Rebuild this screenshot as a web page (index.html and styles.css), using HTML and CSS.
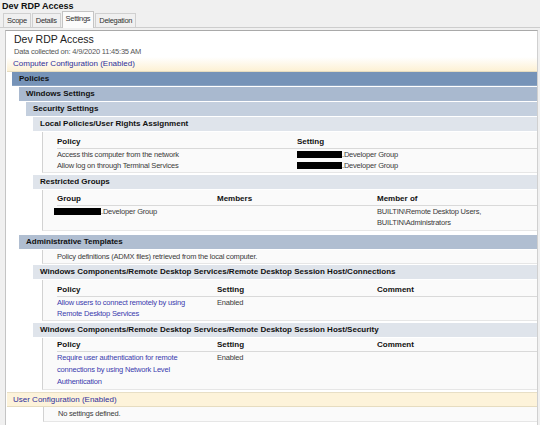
FILE: index.html
```html
<!DOCTYPE html>
<html lang="en">
<head>
    <meta charset="UTF-8">
    <title>Dev RDP Access</title>
    <link rel="stylesheet" href="styles.css">
</head>
<body>
    <div class="win-title">Dev RDP Access</div>

    <div class="tabs">
        <span class="tab">Scope</span>
        <span class="tab">Details</span>
        <span class="tab active">Settings</span>
        <span class="tab">Delegation</span>
    </div>

    <div class="panel">
        <div class="report-title">Dev RDP Access</div>
        <div class="collected">Data collected on: 4/9/2020 11:45:35 AM</div>

        <!-- computer side -->
        <div class="cfg-head">Computer Configuration (Enabled)</div>
        <div class="cfg-body">
            <div class="bar lvl1">Policies</div>
            <div class="sec-body">
                <div class="bar lvl2">Windows Settings</div>
                <div class="sec-body">
                    <div class="bar lvl3">Security Settings</div>
                    <div class="sec-body">
                        <div class="bar lvl4">Local Policies/User Rights Assignment</div>
                        <div class="grid-box">
                            <table class="grid rights">
                                <tr><th>Policy</th><th>Setting</th></tr>
                                <tr><td>Access this computer from the network</td><td><span class="redact"></span>.Developer Group</td></tr>
                                <tr><td>Allow log on through Terminal Services</td><td><span class="redact"></span>.Developer Group</td></tr>
                            </table>
                        </div>

                        <div class="bar lvl4">Restricted Groups</div>
                        <div class="grid-box last">
                            <table class="grid three">
                                <tr><th>Group</th><th>Members</th><th>Member of</th></tr>
                                <tr>
                                    <td><span class="redact wide"></span>.Developer Group</td>
                                    <td></td>
                                    <td>BUILTIN\Remote Desktop Users,<br>BUILTIN\Administrators</td>
                                </tr>
                            </table>
                        </div>
                    </div>
                </div>

                <div class="bar lvl2 admin">Administrative Templates</div>
                <div class="admin-body">
                    <div class="grid-box note">Policy definitions (ADMX files) retrieved from the local computer.</div>

                    <div class="bar lvl4">Windows Components/Remote Desktop Services/Remote Desktop Session Host/Connections</div>
                    <div class="grid-box">
                        <table class="grid three">
                            <tr><th>Policy</th><th>Setting</th><th>Comment</th></tr>
                            <tr><td><span class="link">Allow users to connect remotely by using<br>Remote Desktop Services</span></td><td>Enabled</td><td></td></tr>
                        </table>
                    </div>

                    <div class="bar lvl4">Windows Components/Remote Desktop Services/Remote Desktop Session Host/Security</div>
                    <div class="grid-box tall">
                        <table class="grid three">
                            <tr><th>Policy</th><th>Setting</th><th>Comment</th></tr>
                            <tr><td><span class="link">Require user authentication for remote<br>connections by using Network Level<br>Authentication</span></td><td>Enabled</td><td></td></tr>
                        </table>
                    </div>
                </div>
            </div>
        </div>

        <!-- user side -->
        <div class="cfg-head user">User Configuration (Enabled)</div>
        <div class="grid-box note user-note">No settings defined.</div>
    </div>
</body>
</html>
```

FILE: styles.css
```css
* {
    box-sizing: border-box;
    margin: 0;
    padding: 0;
}

body {
    background-color: #f0f0f0;
    font-family: 'Liberation Sans', Arial, sans-serif;
    font-size: 7.5px;
    letter-spacing: -0.2px;
    color: #3a3a3a;
    overflow: hidden;
}

.win-title {
    height: 12px;
    line-height: 12px;
    padding-left: 2px;
    font-size: 9px;
    font-weight: bold;
    letter-spacing: 0;
    color: #111;
}

/* tab strip */
.tabs {
    display: flex;
    align-items: flex-end;
    height: 16px;
    padding-left: 3px;
    border-bottom: 1px solid #cdcdcd;
}

.tab {
    height: 14px;
    line-height: 13px;
    padding: 0 3px;
    margin-right: 1px;
    border: 1px solid #d0d0d0;
    border-bottom: none;
    background-color: #f0f0f0;
    letter-spacing: -0.3px;
    color: #333;
}

.tab.active {
    height: 17px;
    line-height: 14px;
    margin-bottom: -1px;
    background-color: #fbfbfb;
    border-color: #c4c4c4;
}

/* report panel */
.panel {
    margin: 2px 2px 0 5px;
    height: 400px;
    background-color: #fff;
    border-top: 1px solid #a9a9a9;
    border-left: 1px solid #c4c4c4;
    border-right: 1px solid #d0d0d0;
}

.report-title {
    padding: 2px 0 0 8px;
    line-height: 13px;
    font-size: 10.5px;
    letter-spacing: 0;
    color: #222;
}

.collected {
    padding: 1px 0 0 8px;
    line-height: 10px;
    color: #555;
}

.cfg-head {
    margin-left: 1px;
    padding-left: 6px;
    height: 15px;
    line-height: 14px;
    font-size: 8px;
    letter-spacing: 0;
    color: #2f2f9a;
    background: linear-gradient(to bottom, #ffffff, #fdf1d4);
    border-bottom: 1px solid #e6dcc0;
}

.cfg-head.user {
    margin-top: 1px;
    height: 15px;
    line-height: 13px;
    background: #fdf3da;
    border-top: 1px solid #e8dfc6;
}

.cfg-body {
    padding-left: 6px;
}

.sec-body {
    padding-left: 7px;
}

.admin-body {
    padding-left: 14px;
}

/* heading bars */
.bar {
    height: 14px;
    line-height: 14px;
    margin-bottom: 1px;
    padding-left: 7px;
    font-size: 8px;
    font-weight: bold;
    letter-spacing: 0;
    color: #111;
    white-space: nowrap;
    overflow: hidden;
}

.lvl1 {
    background-color: #7693b8;
    border-bottom: 1px solid #8aa3c2;
}

.lvl2 {
    background-color: #a9b9cf;
}

.lvl3 {
    background-color: #c4cfde;
}

.lvl4 {
    background-color: #dfe4eb;
}

.bar.admin {
    margin-top: 4px;
    background-color: #b0bed1;
}

/* grey data boxes */
.grid-box {
    margin: 0 0 2px 9px;
    padding: 4px 0 1px 14px;
    background-color: #fafafa;
    border-left: 1px solid #d2d2d2;
    border-bottom: 1px solid #e6e6e6;
}

.grid-box.last {
    padding-top: 3px;
    padding-bottom: 2px;
}

.grid-box.tall {
    padding-top: 1px;
    padding-bottom: 1px;
}

.grid-box.tall td {
    line-height: 12px;
}

.grid-box.note {
    height: 14px;
    line-height: 13px;
    padding-top: 0;
    padding-bottom: 0;
    margin-bottom: 1px;
}

.grid-box.user-note {
    margin-left: 37px;
    height: 15px;
    line-height: 14px;
}

.grid {
    width: 100%;
    border-collapse: collapse;
}

.grid th {
    text-align: left;
    font-size: 8px;
    font-weight: bold;
    letter-spacing: 0;
    color: #111;
    line-height: 12px;
    border-bottom: 1px solid #d9d9d9;
}

.grid td {
    line-height: 11px;
    vertical-align: top;
    white-space: nowrap;
}

.rights th:first-child,
.rights td:first-child {
    width: 240px;
}

.three th:nth-child(1),
.three td:nth-child(1),
.three th:nth-child(2),
.three td:nth-child(2) {
    width: 160px;
}

.link {
    color: #3a3aae;
}

.redact {
    display: inline-block;
    width: 45px;
    height: 7px;
    background-color: #000;
    vertical-align: -1px;
}

.redact.wide {
    width: 47px;
    margin-left: -3px;
}
```
